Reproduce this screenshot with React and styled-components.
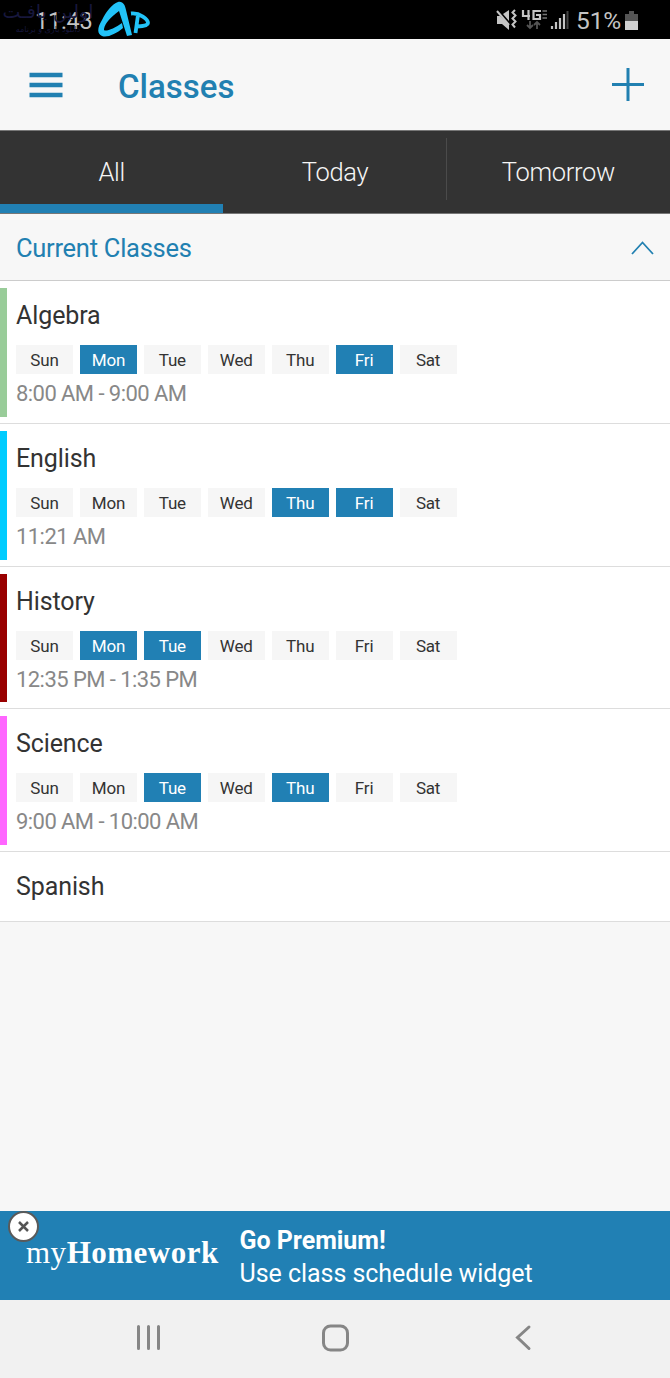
import React from 'react'
import styled, { createGlobalStyle } from 'styled-components'

const GlobalStyle = createGlobalStyle`
    * {
        box-sizing: border-box;
    }

    body {
        margin: 0;
        background: #f7f7f7;
        font-family: Roboto, "Noto Sans", sans-serif;
    }
`

const Screen = styled.div`
    width: 670px;
    height: 1378px;
    display: flex;
    flex-direction: column;
    overflow: hidden;
    background: #f7f7f7;
`

const StatusBar = styled.div`
    position: relative;
    height: 39px;
    flex: none;
    display: flex;
    align-items: center;
    padding: 2px 32px 0 35px;
    background: #000;
    color: #c4c4c4;
`

const Clock = styled.span`
    flex: 1;
    font-size: 23.5px;
    letter-spacing: -0.2px;
`

const Battery = styled.span`
    margin: 0 4px 0 6px;
    font-size: 24.5px;
    letter-spacing: -0.2px;
`

const Watermark = styled.div`
    position: absolute;
    top: -1px;
    left: 2px;
    width: 92px;
    color: #17173c;
    font-family: "DejaVu Sans", sans-serif;
    font-size: 19px;
    line-height: 24px;
    text-align: center;
    white-space: nowrap;
`

const WatermarkNote = styled.div`
    font-size: 8px;
    line-height: 14px;
`

const Mark = styled.svg`
    position: absolute;
    top: 0;
    left: 94px;
`

const Header = styled.header`
    height: 92px;
    flex: none;
    display: flex;
    align-items: center;
    padding: 0 26px 0 29px;
    border-bottom: 1px solid #777;
`

const Title = styled.h1`
    flex: 1;
    margin: 3px 0 0 55px;
    color: #2180b1;
    font-size: 33px;
    font-weight: 500;
`

const Tabs = styled.nav`
    height: 83px;
    flex: none;
    display: flex;
    background: #333;
    border-bottom: 1px solid #777;
`

const Tab = styled.div`
    position: relative;
    flex: 1;
    display: flex;
    justify-content: center;
    align-items: center;
    padding-top: 8px;
    border-bottom: 9px solid ${props => (props.$active ? '#2180b4' : '#333')};
    color: #f5f5f5;
    font-size: 25.5px;
    font-weight: 300;
    letter-spacing: -0.3px;

    & + &::before {
        content: "";
        position: absolute;
        left: -1px;
        top: 7px;
        width: 1px;
        height: 62px;
        background: #4b4b4b;
    }
`

const Section = styled.div`
    height: 67px;
    flex: none;
    display: flex;
    justify-content: space-between;
    align-items: center;
    padding: 2px 16px 0;
    border-bottom: 1px solid #ccc;
    color: #2180b1;
    font-size: 25.5px;
    letter-spacing: -0.27px;
`

const ClassRow = styled.div`
    height: ${props => (props.$short ? 69.5 : 142.8)}px;
    flex: none;
    display: flex;
    align-items: stretch;
    padding: 7px 0 6px;
    background: #fff;
    border-bottom: 1px solid #ddd;
`

const ColorBar = styled.div`
    width: 7px;
    margin-right: 9px;
    background: ${props => props.$color};
`

const ClassName = styled.div`
    height: 57px;
    padding-top: 13px;
    color: #333;
    font-size: 25px;
    line-height: 30px;
    letter-spacing: -0.1px;
`

const Days = styled.div`
    display: flex;
    gap: 6.93px;
`

const Day = styled.span`
    width: 57px;
    height: 29px;
    background: ${props => (props.$on ? '#2180b4' : '#f6f6f6')};
    color: ${props => (props.$on ? '#fff' : '#333')};
    font-size: 17px;
    line-height: 30px;
    letter-spacing: -0.2px;
    text-align: center;
`

const Time = styled.div`
    padding-top: 6px;
    color: #888;
    font-size: 22px;
    line-height: 28px;
    letter-spacing: -0.56px;
`

const Banner = styled.div`
    position: relative;
    height: 89px;
    flex: none;
    display: flex;
    align-items: center;
    margin-top: auto;
    padding-left: 26px;
    background: #2180b4;
    color: #fff;
`

const Brand = styled.div`
    width: 213.5px;
    padding-bottom: 5px;
    font-family: "Liberation Serif", serif;
    font-size: 31px;
    letter-spacing: 0.5px;
    white-space: nowrap;
`

const Pitch = styled.div`
    padding-top: 2px;
    font-size: 25px;
    line-height: 33px;
    letter-spacing: -0.04px;
`

const Close = styled.div`
    position: absolute;
    left: 8px;
    top: 0;
    width: 31px;
    height: 31px;
    display: flex;
    align-items: center;
    justify-content: center;
    border: 2.5px solid #5a5a5a;
    border-radius: 50%;
    background: #fff;
`

const NavBar = styled.div`
    height: 78px;
    flex: none;
    display: flex;
    justify-content: space-between;
    padding: 22px 132px 0 133px;
    background: #f1f1f1;
`

const dayNames = ['Sun', 'Mon', 'Tue', 'Wed', 'Thu', 'Fri', 'Sat']

const classes = [
    { name: 'Algebra', color: '#99cc99', days: ['Mon', 'Fri'], time: '8:00 AM - 9:00 AM' },
    { name: 'English', color: '#00ccff', days: ['Thu', 'Fri'], time: '11:21 AM' },
    { name: 'History', color: '#990000', days: ['Mon', 'Tue'], time: '12:35 PM - 1:35 PM' },
    { name: 'Science', color: '#ff66ff', days: ['Tue', 'Thu'], time: '9:00 AM - 10:00 AM' },
    { name: 'Spanish', color: 'transparent' },
]

const StatusIcons = () => (
    <svg width="74" height="26" viewBox="0 0 74 26" fill="none">
        <path d="M1 8h3l9 8v6l-7-6H1zM7 6l6-4v11z" fill="#c4c4c4" />
        <path d="M1 3l12 14" stroke="#c4c4c4" strokeWidth="2" />
        <path d="M19 2l-2.500 2.500 3 3-3 3 3 3-3 3 2.500 3" stroke="#c4c4c4" strokeWidth="2" />
        <path d="M27 2v6h7M32.500 2v10M45 3h-7.500v8H44V7h-4" stroke="#c4c4c4" strokeWidth="2.200" />
        <path d="M46.500 3h4.500M46.500 6.500h4.500M46.500 10h4.500" stroke="#777" strokeWidth="1.500" />
        <path d="M34 13v7m-3-3l3 3 3-3M41 21v-7m-3 3l3-3 3 3" stroke="#555" strokeWidth="1.800" />
        <path d="M56 18v3M60 14v7M64 10v11M68 6v15" stroke="#c4c4c4" strokeWidth="2.200" />
        <path d="M71.500 3v18" stroke="#444" strokeWidth="2" />
    </svg>
)

export default function App() {
    return (
        <Screen>
            <GlobalStyle />
            <StatusBar>
                <Clock>11:43</Clock>
                <StatusIcons />
                <Battery>51%</Battery>
                <svg width="13" height="22" viewBox="0 0 13 22">
                    <path d="M4 1h5v3h4v7H0V4h4z" fill="#555" />
                    <path d="M0 11h13v9H0z" fill="#d0d0d0" />
                </svg>
                <Watermark dir="rtl">
                    اولین یافـت
                    <WatermarkNote>دانلود بازی و برنامه</WatermarkNote>
                </Watermark>
                <Mark width="60" height="39" viewBox="0 0 60 39">
                    <path d="M24 2c5-1 7 3 8 8l6 25-5 1-8-25c-8 6-14 12-15 18-1 4 10 0 18-6l1 5c-7 6-16 10-21 8-5-2-5-8 0-16 4-8 10-16 16-18z" fill="#22c3f8" />
                    <path d="M37 13.500c9-1 17 6 17 9.500 0 2.500-6 3.500-11 3.500M41.500 33l2.500-18" fill="none" stroke="#22c3f8" strokeWidth="3.800" />
                </Mark>
            </StatusBar>
            <Header>
                <svg width="34" height="26" viewBox="0 0 34 26">
                    <path d="M.5 3h33M.5 13h33M.5 23h33" stroke="#2180b1" strokeWidth="4.500" />
                </svg>
                <Title>Classes</Title>
                <svg width="32" height="33" viewBox="0 0 32 33">
                    <path d="M16 0v33M0 16.500h32" stroke="#2180b1" strokeWidth="3" />
                </svg>
            </Header>
            <Tabs>
                <Tab $active>All</Tab>
                <Tab>Today</Tab>
                <Tab>Tomorrow</Tab>
            </Tabs>
            <Section>
                Current Classes
                <svg width="23" height="14" viewBox="0 0 23 14" fill="none">
                    <path d="M1 13L11.500 1.500 22 13" stroke="#2180b1" strokeWidth="1.800" />
                </svg>
            </Section>
            {classes.map(item => (
                <ClassRow key={item.name} $short={!item.days}>
                    <ColorBar $color={item.color} />
                    <div>
                        <ClassName>{item.name}</ClassName>
                        {item.days && (
                            <>
                                <Days>
                                    {dayNames.map(day => (
                                        <Day key={day} $on={item.days.includes(day)}>{day}</Day>
                                    ))}
                                </Days>
                                <Time>{item.time}</Time>
                            </>
                        )}
                    </div>
                </ClassRow>
            ))}
            <Banner>
                <Brand>my<b>Homework</b></Brand>
                <Pitch>
                    <b>Go Premium!</b>
                    <div>Use class schedule widget</div>
                </Pitch>
                <Close>
                    <svg width="11" height="11" viewBox="0 0 11 11">
                        <path d="M1 1l9 9M10 1l-9 9" stroke="#555" strokeWidth="2.500" />
                    </svg>
                </Close>
            </Banner>
            <NavBar>
                <svg width="30" height="30" viewBox="0 0 30 30">
                    <path d="M5.500 4.500v22M15.500 4.500v22M25.500 4.500v22" stroke="#868686" strokeWidth="3" strokeLinecap="round" />
                </svg>
                <svg width="30" height="30" viewBox="0 0 30 30">
                    <rect x="2.500" y="4" width="24" height="24" rx="7" fill="none" stroke="#868686" strokeWidth="3" />
                </svg>
                <svg width="30" height="30" viewBox="0 0 30 30">
                    <path d="M21 5L9.500 15.500l11.500 11" fill="none" stroke="#868686" strokeWidth="3" strokeLinecap="round" />
                </svg>
            </NavBar>
        </Screen>
    )
}
